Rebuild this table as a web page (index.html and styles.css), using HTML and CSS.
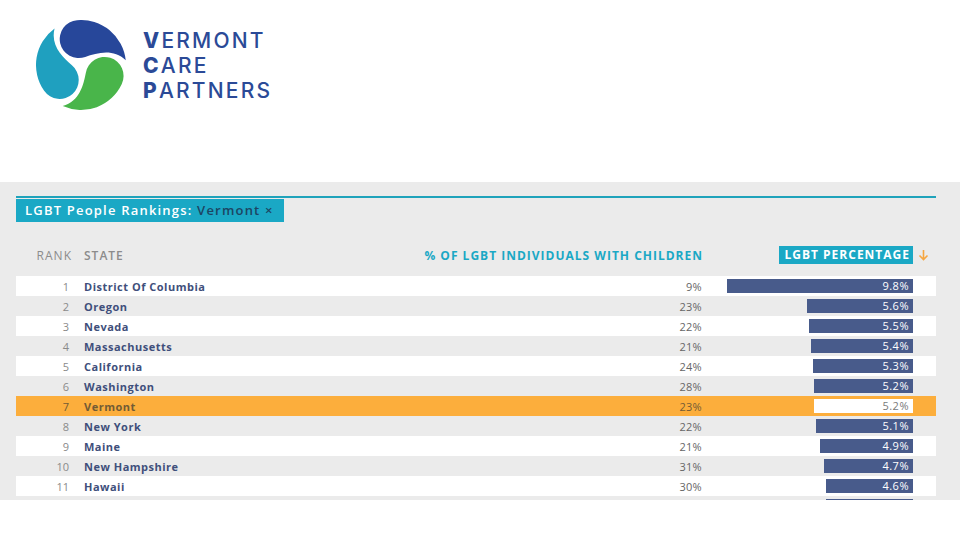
FILE: index.html
```html
<!DOCTYPE html>
<html lang="en">
<head>
<meta charset="utf-8">
<title>Vermont Care Partners – LGBT People Rankings</title>
<link rel="stylesheet" href="styles.css">
</head>
<body>
<header class="top">
  <div class="brand">
    <svg class="logo" viewBox="-45 -45 90 90" width="90" height="90" aria-hidden="true">
      <defs>
        <path id="drop" d="M44.75 -4.7 A45 45 0 0 0 -3.92 -44.83 A19 19 0 1 0 4.23 -8.05 C16 -12 32 -17 44.75 -4.7 Z"/>
      </defs>
      <use href="#drop" fill="#27479a"/>
      <use href="#drop" fill="#1fa0bf" transform="rotate(-120)"/>
      <use href="#drop" fill="#49b54a" transform="rotate(120)"/>
    </svg>
    <div class="brand-name">
      <div><b>V</b>ERMONT</div>
      <div><b>C</b>ARE</div>
      <div><b>P</b>ARTNERS</div>
    </div>
  </div>
</header>

<section class="panel">
  <div class="tabbar">
    <div class="tab">LGBT People Rankings: <span class="tab-sel">Vermont ×</span></div>
  </div>

  <div class="cols thead">
    <div class="c-rank h-rank">Rank</div>
    <div class="c-state h-state">State</div>
    <div class="c-pct h-pct">% of LGBT Individuals with Children</div>
    <div class="c-bar"><span class="h-sort">LGBT Percentage</span></div>
    <div class="c-arrow">
      <svg width="11" height="12" viewBox="0 0 11 12" aria-hidden="true"><path d="M5.5 1 V10.5 M1.5 6.5 L5.5 10.5 L9.5 6.5" fill="none" stroke="#f6a640" stroke-width="1.6"/></svg>
    </div>
  </div>

  <div class="rows">
    <div class="cols row"><div class="c-rank">1</div><div class="c-state">District Of Columbia</div><div class="c-pct">9%</div><div class="c-bar"><span class="bar" style="width:186px">9.8%</span></div><div></div></div>
    <div class="cols row"><div class="c-rank">2</div><div class="c-state">Oregon</div><div class="c-pct">23%</div><div class="c-bar"><span class="bar" style="width:106px">5.6%</span></div><div></div></div>
    <div class="cols row"><div class="c-rank">3</div><div class="c-state">Nevada</div><div class="c-pct">22%</div><div class="c-bar"><span class="bar" style="width:104px">5.5%</span></div><div></div></div>
    <div class="cols row"><div class="c-rank">4</div><div class="c-state">Massachusetts</div><div class="c-pct">21%</div><div class="c-bar"><span class="bar" style="width:102px">5.4%</span></div><div></div></div>
    <div class="cols row"><div class="c-rank">5</div><div class="c-state">California</div><div class="c-pct">24%</div><div class="c-bar"><span class="bar" style="width:100px">5.3%</span></div><div></div></div>
    <div class="cols row"><div class="c-rank">6</div><div class="c-state">Washington</div><div class="c-pct">28%</div><div class="c-bar"><span class="bar" style="width:99px">5.2%</span></div><div></div></div>
    <div class="cols row row-hl"><div class="c-rank">7</div><div class="c-state">Vermont</div><div class="c-pct">23%</div><div class="c-bar"><span class="bar" style="width:99px">5.2%</span></div><div></div></div>
    <div class="cols row"><div class="c-rank">8</div><div class="c-state">New York</div><div class="c-pct">22%</div><div class="c-bar"><span class="bar" style="width:97px">5.1%</span></div><div></div></div>
    <div class="cols row"><div class="c-rank">9</div><div class="c-state">Maine</div><div class="c-pct">21%</div><div class="c-bar"><span class="bar" style="width:93px">4.9%</span></div><div></div></div>
    <div class="cols row"><div class="c-rank">10</div><div class="c-state">New Hampshire</div><div class="c-pct">31%</div><div class="c-bar"><span class="bar" style="width:89px">4.7%</span></div><div></div></div>
    <div class="cols row"><div class="c-rank">11</div><div class="c-state">Hawaii</div><div class="c-pct">30%</div><div class="c-bar"><span class="bar" style="width:87px">4.6%</span></div><div></div></div>
    <div class="cols row"><div class="c-rank"></div><div class="c-state"></div><div class="c-pct"></div><div class="c-bar"><span class="bar" style="width:87px"></span></div><div></div></div>
  </div>
</section>
</body>
</html>
```

FILE: styles.css
```css
html, body {
  margin: 0;
  padding: 0;
  background: #ffffff;
  font-family: "Open Sans", "Noto Sans", sans-serif;
}

.top {
  height: 182px;
  box-sizing: border-box;
  padding: 20px 0 0 36px;
}

.brand {
  display: flex;
  align-items: center;
  gap: 17px;
}

.logo {
  display: block;
  width: 90px;
  height: 90px;
}

.brand-name {
  font-family: Inter, "Noto Sans", sans-serif;
  font-size: 21px;
  line-height: 25px;
  font-weight: 500;
  letter-spacing: 2.2px;
  color: #2b4a97;
}

.brand-name b {
  font-weight: 800;
}

.panel {
  background: #ebebeb;
  height: 318px;
  box-sizing: border-box;
  padding: 14px 24px 0 16px;
  overflow: hidden;
}

.tabbar {
  border-top: 2px solid #1fa3bb;
}

.tab {
  display: inline-block;
  height: 23px;
  line-height: 23px;
  padding: 0 10px 0 9px;
  background: #1aa8c5;
  color: #ffffff;
  font-size: 13px;
  font-weight: 600;
  letter-spacing: 1.2px;
}

.tab-sel {
  color: #1d4563;
}

.cols {
  display: grid;
  grid-template-columns: 53px 1fr 300px 211px 23px;
  align-items: center;
}

.thead {
  margin-top: 24px;
  height: 18px;
  font-size: 12px;
  letter-spacing: 1px;
  text-transform: uppercase;
  color: #8c8c8c;
}

.c-rank {
  text-align: right;
}

.h-rank {
  margin-right: -3px;
}

.c-state {
  padding-left: 15px;
}

.h-state {
  font-weight: 600;
}

.c-pct {
  text-align: right;
}

.h-pct {
  color: #1aa8c5;
  font-weight: 700;
  white-space: nowrap;
  margin-right: -1px;
}

.c-bar {
  display: flex;
  justify-content: flex-end;
}

.h-sort {
  display: block;
  height: 18px;
  line-height: 18px;
  padding: 0 3px 0 5px;
  background: #1aa8c5;
  color: #ffffff;
  font-weight: 700;
}

.c-arrow {
  display: flex;
  padding-left: 5px;
}

.c-arrow svg {
  display: block;
}

.rows {
  margin-top: 12px;
}

.row {
  height: 20px;
  font-size: 11px;
  color: #8a8a8a;
}

.row:nth-child(odd) {
  background: #ffffff;
}

.row .c-state {
  color: #3f4f7b;
  font-weight: 700;
  letter-spacing: 0.5px;
}

.row .c-pct {
  color: #666666;
  letter-spacing: 0.3px;
}

.bar {
  display: block;
  height: 14px;
  line-height: 14px;
  box-sizing: border-box;
  padding-right: 4px;
  background: #485b8b;
  color: #ffffff;
  text-align: right;
  letter-spacing: 0.5px;
}

.row-hl,
.row-hl:nth-child(odd) {
  background: #fcae3c;
}

.row-hl .c-rank,
.row-hl .c-state,
.row-hl .c-pct {
  color: #725b35;
}

.row-hl .bar {
  background: #ffffff;
  color: #7a7a7a;
}
```
